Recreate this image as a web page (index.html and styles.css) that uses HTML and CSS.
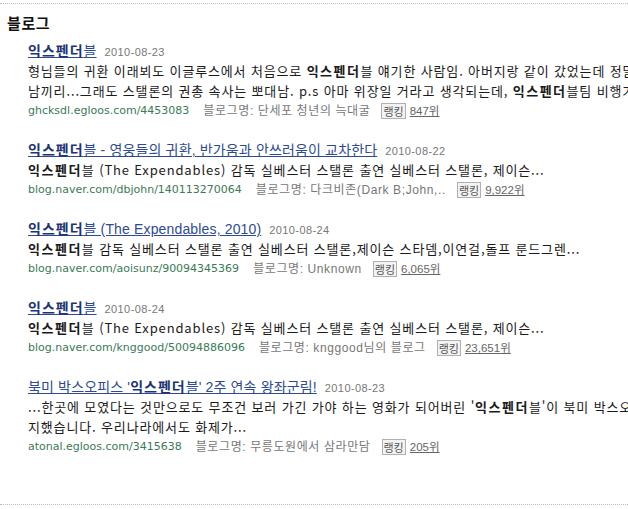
FILE: index.html
```html
<!DOCTYPE html>
<html lang="ko">
<head>
<meta charset="utf-8">
<title>블로그</title>
<link rel="stylesheet" href="styles.css">
</head>
<body>
<div class="section">
  <h2 class="heading">블로그</h2>
  <ul class="results">
    <li class="item">
      <div class="title-row"><a class="title" href="#"><b>익스펜더</b>블</a><span class="date">2010-08-23</span></div>
      <p class="desc"><span class="line">형님들의 귀환 이래뵈도 이글루스에서 처음으로 <b>익스펜더</b>블 얘기한 사람임. 아버지랑 같이 갔었는데 정말 사</span><span class="line">남끼리...그래도 스탤론의 권총 속사는 뽀대남. p.s 아마 위장일 거라고 생각되는데, <b>익스펜더</b>블팀 비행기</span></p>
      <div class="meta"><span class="url">ghcksdl.egloos.com/4453083</span><span class="blog">블로그명: 단세포 청년의 늑대굴</span><span class="rank-label">랭킹</span><a class="rank" href="#">847위</a></div>
    </li>
    <li class="item">
      <div class="title-row"><a class="title" href="#"><b>익스펜더</b>블 - 영웅들의 귀환, 반가움과 안쓰러움이 교차한다</a><span class="date">2010-08-22</span></div>
      <p class="desc"><span class="line"><b>익스펜더</b>블 (The Expendables) 감독 실베스터 스탤론 출연 실베스터 스탤론, 제이슨...</span></p>
      <div class="meta"><span class="url">blog.naver.com/dbjohn/140113270064</span><span class="blog">블로그명: 다크비존(Dark B;John,..</span><span class="rank-label">랭킹</span><a class="rank" href="#">9,922위</a></div>
    </li>
    <li class="item">
      <div class="title-row"><a class="title" href="#"><b>익스펜더</b>블 (The Expendables, 2010)</a><span class="date">2010-08-24</span></div>
      <p class="desc"><span class="line"><b>익스펜더</b>블 감독 실베스터 스탤론 출연 실베스터 스탤론,제이슨 스타뎀,이연걸,돌프 룬드그렌...</span></p>
      <div class="meta"><span class="url">blog.naver.com/aoisunz/90094345369</span><span class="blog">블로그명: Unknown</span><span class="rank-label">랭킹</span><a class="rank" href="#">6,065위</a></div>
    </li>
    <li class="item">
      <div class="title-row"><a class="title" href="#"><b>익스펜더</b>블</a><span class="date">2010-08-24</span></div>
      <p class="desc"><span class="line"><b>익스펜더</b>블 (The Expendables) 감독 실베스터 스탤론 출연 실베스터 스탤론, 제이슨...</span></p>
      <div class="meta"><span class="url">blog.naver.com/knggood/50094886096</span><span class="blog">블로그명: knggood님의 블로그</span><span class="rank-label">랭킹</span><a class="rank" href="#">23,651위</a></div>
    </li>
    <li class="item">
      <div class="title-row"><a class="title" href="#">북미 박스오피스 '<b>익스펜더</b>블' 2주 연속 왕좌군림!</a><span class="date">2010-08-23</span></div>
      <p class="desc"><span class="line">...한곳에 모였다는 것만으로도 무조건 보러 가긴 가야 하는 영화가 되어버린 '<b>익스펜더</b>블'이 북미 박스오피스 1위를 차</span><span class="line">지했습니다. 우리나라에서도 화제가...</span></p>
      <div class="meta"><span class="url">atonal.egloos.com/3415638</span><span class="blog">블로그명: 무릉도원에서 삼라만담</span><span class="rank-label">랭킹</span><a class="rank" href="#">205위</a></div>
    </li>
  </ul>
</div>
</body>
</html>
```

FILE: styles.css
```css
html, body {
  margin: 0;
  padding: 0;
  overflow: hidden;
  background: #fff;
}
body {
  font-family: "Noto Sans CJK KR", sans-serif;
  font-size: 13px;
  color: #1a1a1a;
  width: 628px;
  height: 509px;
}
.section {
  margin-top: 3px;
  border-top: 1px dotted #bdbdbd;
  border-bottom: 1px dotted #bdbdbd;
  height: 502px;
  box-sizing: border-box;
  white-space: nowrap;
  overflow: hidden;
}
.heading {
  margin: 9px 0 0 7px;
  font-size: 15px;
  line-height: 20px;
  font-weight: bold;
  letter-spacing: 0.6px;
  color: #111;
}
.results {
  list-style: none;
  margin: 8px 0 0 28px;
  padding: 0;
}
.item {
  margin-bottom: 19px;
}
.title-row, .line, .meta {
  display: block;
  line-height: 20px;
  height: 20px;
}
.title {
  font-family: "Liberation Sans", "Noto Sans CJK KR", sans-serif;
  font-size: 14px;
  color: #2d4b93;
  text-decoration: underline;
  letter-spacing: 0.15px;
}
.title b {
  color: #1c3473;
  letter-spacing: 1px;
}
.desc b {
  letter-spacing: 1.5px;
}
b {
  font-weight: bold;
}
.date {
  margin-left: 8px;
  font-family: "Liberation Sans", sans-serif;
  font-size: 11px;
  letter-spacing: 0.4px;
  color: #777;
}
.desc {
  margin: 0;
  letter-spacing: 0.85px;
}
.meta {
  display: flex;
  align-items: center;
  color: #777;
}
.url {
  font-family: "DejaVu Sans", sans-serif;
  font-size: 11px;
  color: #3b7a55;
}
.blog {
  margin-left: 14px;
  font-family: "Liberation Sans", "Noto Sans CJK KR", sans-serif;
  font-size: 12px;
  letter-spacing: 0.6px;
}
.rank-label {
  margin-left: 11px;
  border: 1px solid #b0b0b0;
  background: #f3f3f3;
  color: #555;
  font-size: 11px;
  line-height: 14px;
  padding: 0 1px;
}
.rank {
  margin-left: 4px;
  font-family: "Liberation Sans", "Noto Sans CJK KR", sans-serif;
  font-size: 11.5px;
  color: #666;
  text-decoration: underline;
}
```
